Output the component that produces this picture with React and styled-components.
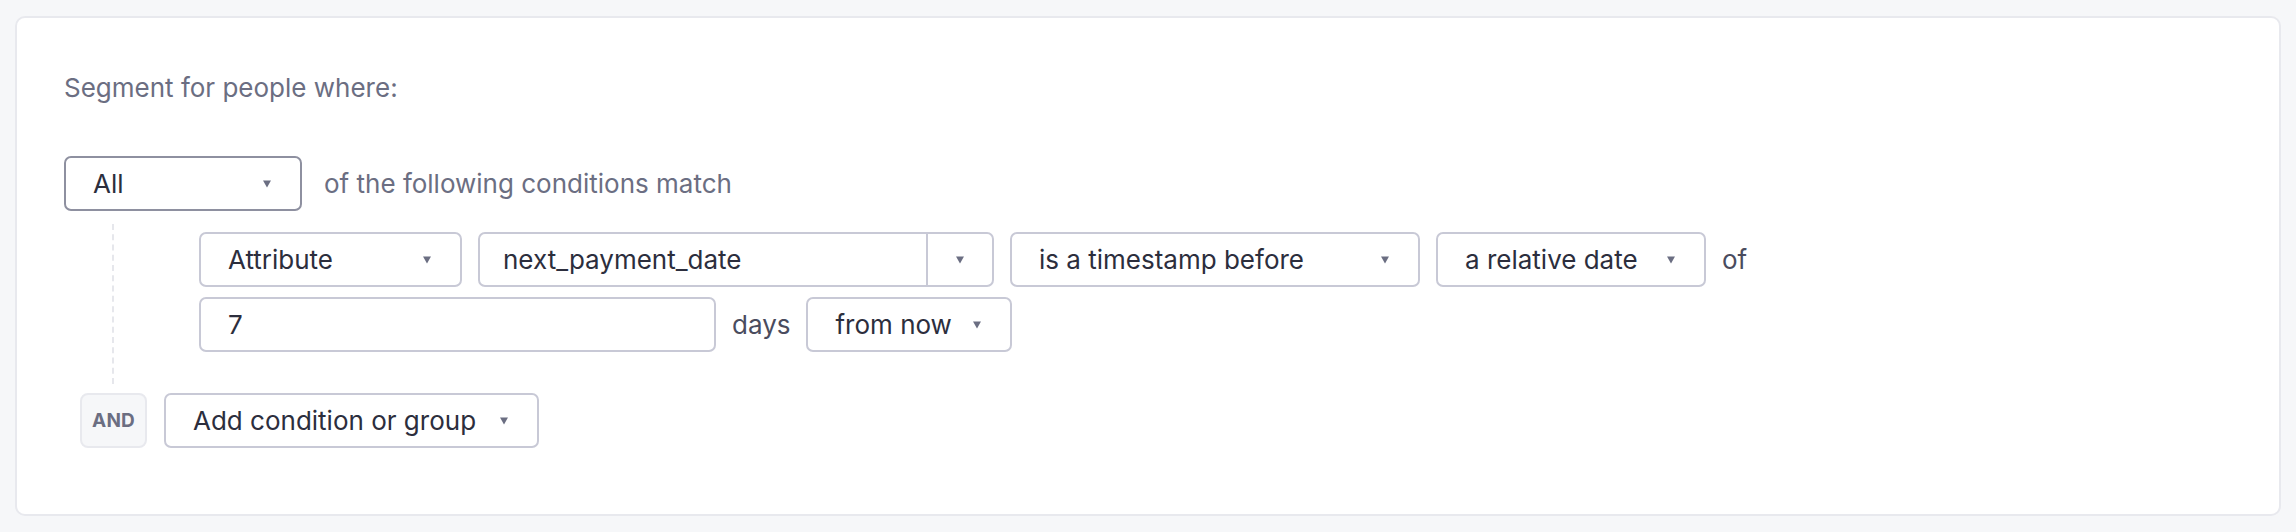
import React from "react";
import styled, { createGlobalStyle } from "styled-components";

const GlobalStyle = createGlobalStyle`
  body {
    margin: 0;
    background: #f6f7f9;
    font-family: Inter, "Liberation Sans", sans-serif;
  }
`;

function Arrow() {
  return (
    <svg width="8" height="8" viewBox="0 0 8 8">
      <path d="M0 0.5 H8 L4 7.5 Z" fill="#6b6e82" />
    </svg>
  );
}

function Select({ label, width, strong }) {
  return (
    <SelectBox $width={width} $strong={strong}>
      <span>{label}</span>
      <Arrow />
    </SelectBox>
  );
}

function App() {
  return (
    <>
      <GlobalStyle />
      <Page>
        <Card>
          <Title>Segment for people where:</Title>
          <MatchRow>
            <Select label="All" width={238} strong />
            <Label>of the following conditions match</Label>
          </MatchRow>
          <Conditions>
            <Row>
              <Select label="Attribute" width={263} />
              <Combo>
                <ComboText>next_payment_date</ComboText>
                <ComboArrow>
                  <Arrow />
                </ComboArrow>
              </Combo>
              <Select label="is a timestamp before" width={410} />
              <Select label="a relative date" width={270} />
              <Word>of</Word>
            </Row>
            <Row>
              <TextInput>7</TextInput>
              <Word>days</Word>
              <Select label="from now" width={206} />
            </Row>
          </Conditions>
          <AndRow>
            <AndBadge>AND</AndBadge>
            <Select label="Add condition or group" width={375} />
          </AndRow>
        </Card>
      </Page>
    </>
  );
}

const Page = styled.div`
  padding: 16px 15px;
`;

const Card = styled.div`
  background: #ffffff;
  border: 2px solid #e8e9ee;
  border-radius: 10px;
  padding: 53px 47px 67px 47px;
  height: 500px;
  box-sizing: border-box;
`;

const Title = styled.div`
  font-size: 26px;
  line-height: 34px;
  color: #6b6e82;
`;

const MatchRow = styled.div`
  display: flex;
  align-items: center;
  gap: 22px;
  margin-top: 51px;
`;

const Label = styled.span`
  font-size: 26px;
  color: #6b6e82;
`;

const Word = styled.span`
  font-size: 26px;
  color: #4a4c5e;
`;

const SelectBox = styled.div`
  box-sizing: border-box;
  width: ${(p) => p.$width}px;
  height: 55px;
  display: flex;
  align-items: center;
  justify-content: space-between;
  padding: 0 29px 0 27px;
  border: 2px solid ${(p) => (p.$strong ? "#8e90a0" : "#c8c9d6")};
  border-radius: 7px;
  background: #fff;
  font-size: 26px;
  color: #2c2e3d;
`;

const Conditions = styled.div`
  margin: 13px 0 0 48px;
  padding: 8px 0 32px 85px;
  border-left: 2px dashed #e6e7ec;
  display: flex;
  flex-direction: column;
  gap: 10px;
`;

const Row = styled.div`
  display: flex;
  align-items: center;
  gap: 16px;
`;

const Combo = styled.div`
  box-sizing: border-box;
  width: 516px;
  height: 55px;
  display: flex;
  border: 2px solid #c8c9d6;
  border-radius: 7px;
  background: #fff;
`;

const ComboText = styled.div`
  flex: 1;
  display: flex;
  align-items: center;
  padding-left: 23px;
  border-right: 2px solid #c8c9d6;
  font-size: 26px;
  color: #2c2e3d;
`;

const ComboArrow = styled.div`
  width: 64px;
  display: flex;
  align-items: center;
  justify-content: center;
`;

const TextInput = styled.div`
  box-sizing: border-box;
  width: 517px;
  height: 55px;
  display: flex;
  align-items: center;
  padding-left: 27px;
  border: 2px solid #c8c9d6;
  border-radius: 7px;
  font-size: 26px;
  color: #2c2e3d;
`;

const AndRow = styled.div`
  display: flex;
  align-items: center;
  gap: 17px;
  margin: 9px 0 0 16px;
`;

const AndBadge = styled.div`
  box-sizing: border-box;
  width: 67px;
  height: 55px;
  display: flex;
  align-items: center;
  justify-content: center;
  background: #f6f7f9;
  border: 2px solid #e8e9ee;
  border-radius: 8px;
  font-size: 19px;
  font-weight: 700;
  letter-spacing: 0.2px;
  color: #6b6e82;
`;

export default App;
